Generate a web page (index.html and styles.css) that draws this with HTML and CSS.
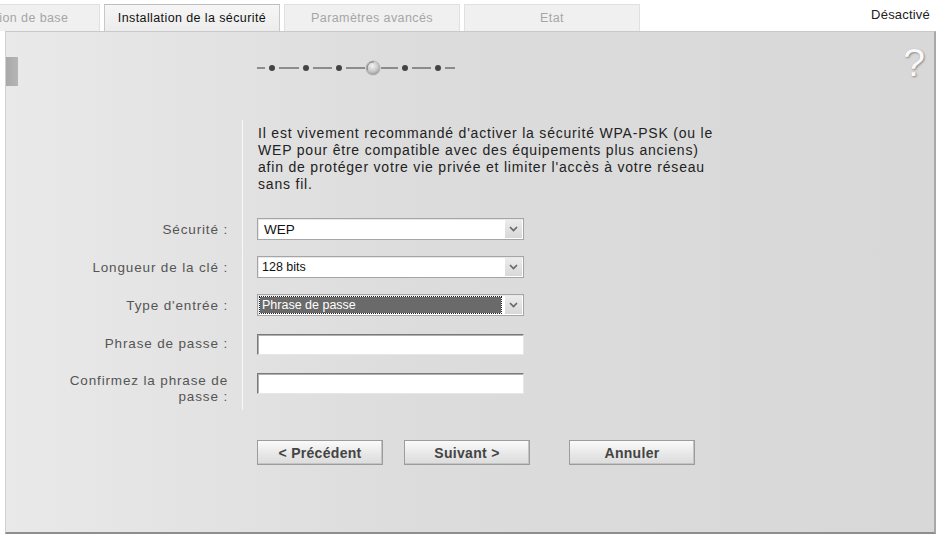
FILE: index.html
```html
<!DOCTYPE html>
<html lang="fr">

<head>
    <meta charset="UTF-8">
    <title>Installation de la sécurité</title>
    <link rel="stylesheet" href="styles.css">
</head>

<body>
    <div class="topbar">
        <div class="tabs">
            <div class="tab tab-first">Installation de base</div>
            <div class="tab active">Installation de la sécurité</div>
            <div class="tab">Paramètres avancés</div>
            <div class="tab">Etat</div>
        </div>
        <div class="status">Désactivé</div>
    </div>

    <div class="panel">
        <div class="head">
            <div class="marker"></div>
            <svg class="steps" width="200" height="20" viewBox="0 0 200 20">
                <defs>
                    <radialGradient id="knob" cx="45%" cy="35%" r="65%">
                        <stop offset="0" stop-color="#f4f4f4" />
                        <stop offset="0.6" stop-color="#c9c9c9" />
                        <stop offset="1" stop-color="#9a9a9a" />
                    </radialGradient>
                </defs>
                <g stroke="#555" stroke-width="1.2">
                    <line x1="0" y1="10" x2="8" y2="10" />
                    <line x1="22" y1="10" x2="42" y2="10" />
                    <line x1="56" y1="10" x2="75" y2="10" />
                    <line x1="89" y1="10" x2="108" y2="10" />
                    <line x1="124" y1="10" x2="141" y2="10" />
                    <line x1="155" y1="10" x2="174" y2="10" />
                    <line x1="188" y1="10" x2="198" y2="10" />
                </g>
                <g fill="#444">
                    <circle cx="15" cy="10" r="3" />
                    <circle cx="49" cy="10" r="3" />
                    <circle cx="82" cy="10" r="3" />
                    <circle cx="148" cy="10" r="3" />
                    <circle cx="181" cy="10" r="3" />
                </g>
                <circle cx="116" cy="10" r="7" fill="url(#knob)" stroke="#b0b0b0" stroke-width="0.8" />
                <path d="M110.5 12 A6 6 0 0 1 117 4" fill="none" stroke="#7a7a7a" stroke-width="1" />
            </svg>
            <div class="help">?</div>
        </div>

        <div class="form">
            <div class="cell-label"></div>
            <div class="cell-field intro">
                Il est vivement recommandé d'activer la sécurité WPA-PSK (ou le<br>
                WEP pour être compatible avec des équipements plus anciens)<br>
                afin de protéger votre vie privée et limiter l'accès à votre réseau<br>
                sans fil.
            </div>

            <div class="cell-label">Sécurité :</div>
            <div class="cell-field">
                <div class="select"><span class="value">WEP</span><span class="arrow"><svg width="9" height="6" viewBox="0 0 9 6"><path d="M1 1 L4.5 4.5 L8 1" fill="none" stroke="#666" stroke-width="1.6" /></svg></span></div>
            </div>

            <div class="cell-label">Longueur de la clé :</div>
            <div class="cell-field">
                <div class="select"><span class="value small">128 bits</span><span class="arrow"><svg width="9" height="6" viewBox="0 0 9 6"><path d="M1 1 L4.5 4.5 L8 1" fill="none" stroke="#666" stroke-width="1.6" /></svg></span></div>
            </div>

            <div class="cell-label">Type d'entrée :</div>
            <div class="cell-field">
                <div class="select focused"><span class="value small">Phrase de passe</span><span class="arrow"><svg width="9" height="6" viewBox="0 0 9 6"><path d="M1 1 L4.5 4.5 L8 1" fill="none" stroke="#666" stroke-width="1.6" /></svg></span></div>
            </div>

            <div class="cell-label row-input">Phrase de passe :</div>
            <div class="cell-field row-input">
                <input class="text" type="text">
            </div>

            <div class="cell-label row-last">Confirmez la phrase de passe :</div>
            <div class="cell-field row-last">
                <input class="text" type="text">
            </div>

            <div class="cell-blank"></div>
            <div class="buttons">
                <button class="btn">&lt; Précédent</button>
                <button class="btn">Suivant &gt;</button>
                <button class="btn btn-cancel">Annuler</button>
            </div>
        </div>
    </div>
</body>

</html>
```

FILE: styles.css
```css
body {
    margin: 0;
    background: #fff;
    font-family: "Liberation Sans", Arial, sans-serif;
    font-size: 13px;
    color: #222;
    overflow: hidden;
}

.topbar {
    display: flex;
    justify-content: space-between;
    height: 31px;
    overflow: hidden;
}

.tabs {
    display: flex;
    gap: 4px;
    padding-top: 4px;
    margin-left: -75px;
}

.tab {
    width: 174px;
    height: 26px;
    line-height: 27px;
    text-align: center;
    font-size: 12.5px;
    letter-spacing: 0.4px;
    color: #a6a6a6;
    background: #f0f0f0;
    border: 1px solid #e0e0e0;
    border-bottom: none;
}

.tab-first {
    width: 173px;
    text-indent: -4px;
}

.tab.active {
    color: #111;
    background: linear-gradient(#f6f6f6, #ececec);
    border-color: #c8c8c8;
    border-top: 1px solid #bdbdbd;
}

.status {
    padding: 7px 7px 0 0;
    font-size: 13px;
    letter-spacing: 0.2px;
    color: #222;
}

.panel {
    margin-left: 5px;
    width: 928px;
    height: 500px;
    background: linear-gradient(to right, #e9e9e9, #dcdcdc 45%, #d8d8d8);
    border-top: 1px solid #c9c9c9;
    border-left: 1px solid #d0d0d0;
    border-right: 2px solid #a8a8a8;
    border-bottom: 2px solid #8e8e8e;
}

.head {
    display: flex;
    align-items: flex-start;
    height: 88px;
}

.marker {
    width: 12px;
    height: 29px;
    margin-top: 25px;
    background: linear-gradient(to right, #a9a9a9, #b5b5b5);
}

.steps {
    margin: 26px 0 0 239px;
}

.help {
    margin: 11px 0 0 auto;
    padding-right: 9px;
    font-size: 39px;
    line-height: 40px;
    color: #fafafa;
    text-shadow: 1px 1px 2px #8a8a8a, 0 0 1px #bbb;
}

.form {
    display: grid;
    grid-template-columns: 237px 1fr;
}

.cell-label {
    border-right: 1px solid #f8f8f8;
    padding: 9px 14px 0 40px;
    height: 29px;
    line-height: 17px;
    text-align: right;
    font-size: 13.5px;
    letter-spacing: 0.85px;
    color: #555;
}

.cell-field {
    padding: 6px 0 0 14px;
    height: 32px;
}

.cell-label:first-child {
    height: 92px;
    padding: 0;
}

.intro {
    height: 87px;
    padding: 5px 0 0 15px;
    line-height: 17px;
    font-size: 14px;
    letter-spacing: 0.8px;
    color: #222;
}

.row-input.cell-label {
    height: 30px;
    padding-top: 9px;
}

.row-input.cell-field {
    height: 31px;
    padding-top: 8px;
}

.row-last.cell-label {
    height: 37px;
    padding-top: 8px;
    line-height: 16px;
}

.row-last.cell-field {
    height: 37px;
    padding-top: 8px;
}

.select {
    display: flex;
    width: 265px;
    height: 20px;
    background: #fff;
    border: 1px solid #a5a5a5;
    box-shadow: inset 1px 1px 0 #e8e8e8;
}

.select .value {
    flex: 1;
    padding-left: 6px;
    line-height: 21px;
    font-size: 13.5px;
    color: #111;
}

.select .value.small {
    font-size: 12.5px;
    padding-left: 4px;
}

.select.focused .value {
    margin: 2px 3px 2px 2px;
    padding-left: 2px;
    line-height: 17px;
    background: #6a6a6a;
    color: #fff;
    outline: 1px dotted #222;
}

.select .arrow {
    display: flex;
    align-items: center;
    justify-content: center;
    width: 17px;
    margin: 1px;
    background: linear-gradient(#ececec, #d8d8d8);
}

.text {
    display: block;
    box-sizing: border-box;
    width: 267px;
    height: 21px;
    margin: 0;
    padding: 0;
    background: #fff;
    border: 1px solid;
    border-color: #7a7a7a #e6e6e6 #e6e6e6 #7a7a7a;
    box-shadow: inset 1px 1px 0 #b0b0b0;
}

.buttons {
    display: flex;
    gap: 21px;
    padding: 30px 0 0 14px;
}

.btn {
    width: 126px;
    height: 25px;
    font-family: "Liberation Sans", Arial, sans-serif;
    font-size: 14px;
    font-weight: bold;
    letter-spacing: 0.3px;
    color: #444;
    background: linear-gradient(#fbfbfb, #e6e6e6 60%, #dcdcdc);
    border: 1px solid #9c9c9c;
    box-shadow: inset -1px -1px 0 #c4c4c4;
}

.btn-cancel {
    margin-left: 18px;
}
```
